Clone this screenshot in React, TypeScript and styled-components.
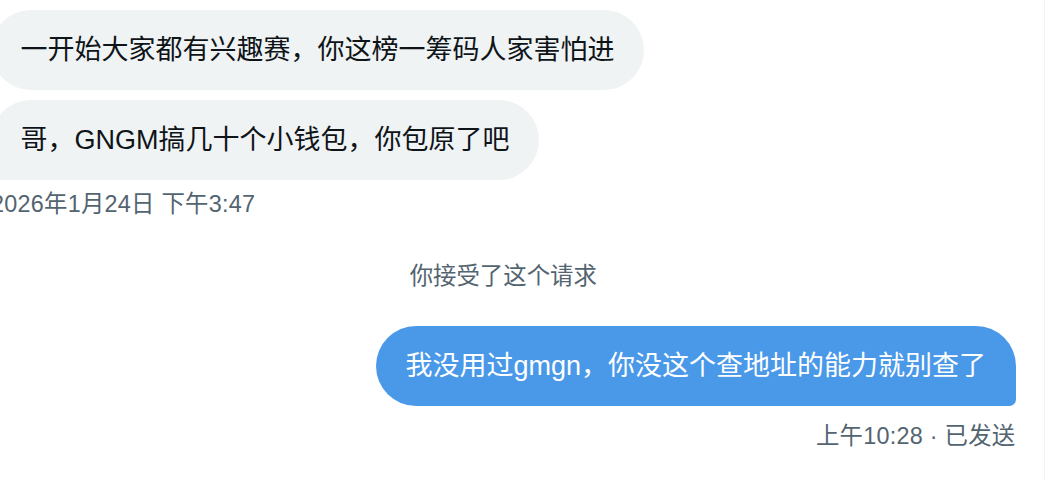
import React from "react";
import styled, { createGlobalStyle } from "styled-components";

const FONT =
  '"Liberation Sans", "Noto Sans CJK SC", "Noto Sans", sans-serif';

const GlobalStyle = createGlobalStyle`
  html, body {
    margin: 0;
    padding: 0;
    background: #ffffff;
  }
  body {
    font-family: ${FONT};
    color: #0f1419;
  }
`;

interface Message {
  id: string;
  text: string;
}

const received: Message[] = [
  { id: "m1", text: "一开始大家都有兴趣赛，你这榜一筹码人家害怕进" },
  { id: "m2", text: "哥，GNGM搞几十个小钱包，你包原了吧" },
];

const App: React.FC = () => {
  return (
    <>
      <GlobalStyle />
      <Page>
        <Conversation>
          <Group>
            {received.map((m, index) => (
              <Bubble key={m.id} $last={index === received.length - 1}>
                {m.text}
              </Bubble>
            ))}
            <Meta>2026年1月24日 下午3:47</Meta>
          </Group>

          <Notice>你接受了这个请求</Notice>

          <Group $mine>
            <Bubble $mine $last>
              我没用过gmgn，你没这个查地址的能力就别查了
            </Bubble>
            <Meta $mine>上午10:28 · 已发送</Meta>
          </Group>
        </Conversation>
        <Aside />
      </Page>
    </>
  );
};

const Page = styled.div`
  display: flex;
  width: 1064px;
  height: 480px;
  overflow: hidden;
`;

const Conversation = styled.main`
  display: flex;
  flex-direction: column;
  flex: 0 0 1054px;
  margin-left: -9px;
  padding: 10px 28.5px 0 0;
  box-sizing: border-box;
  border-right: 1px solid #eff3f4;
`;

const Aside = styled.div`
  flex: 1;
  background: #ffffff;
`;

const Group = styled.div<{ $mine?: boolean }>`
  display: flex;
  flex-direction: column;
  align-items: ${(p) => (p.$mine ? "flex-end" : "flex-start")};
  gap: 10px;
  margin-top: ${(p) => (p.$mine ? "35px" : "0")};
`;

const Bubble = styled.div<{ $mine?: boolean; $last?: boolean }>`
  padding: 22px 29.5px;
  font-size: 27px;
  line-height: 36px;
  border-radius: 43px;
  white-space: nowrap;
  background: ${(p) => (p.$mine ? "#4a99e9" : "#eff3f4")};
  color: ${(p) => (p.$mine ? "#ffffff" : "#0f1419")};
  ${(p) => p.$last && (p.$mine ? "border-bottom-right-radius: 7px;" : "border-bottom-left-radius: 7px;")}
`;

const Meta = styled.div<{ $mine?: boolean }>`
  font-size: 23.4px;
  line-height: 29px;
  letter-spacing: 0.25px;
  color: #536471;
  margin-top: ${(p) => (p.$mine ? "6px" : "0")};
`;

const Notice = styled.div`
  margin-top: 43px;
  text-align: center;
  font-size: 23.4px;
  line-height: 29px;
  color: #536471;
`;

export default App;
